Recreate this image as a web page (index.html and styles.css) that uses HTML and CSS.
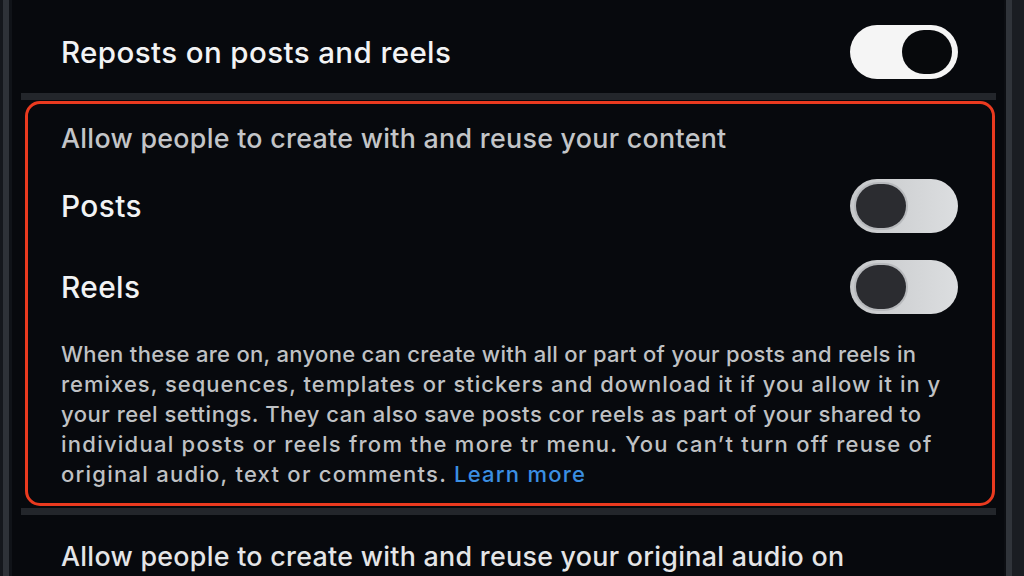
FILE: index.html
```html
<!DOCTYPE html>
<html>
<head>
  <meta charset="UTF-8">
  <title>Sharing and reuse</title>
  <link rel="stylesheet" href="styles.css">
</head>
<body>
  <div class="edge edge-left"></div>

  <div class="screen">
    <div class="setting-row top-row">
      <span class="setting-label">Reposts on posts and reels</span>
      <span class="toggle toggle-on"><span class="knob"></span></span>
    </div>

    <div class="divider"></div>

    <div class="reuse-box">
      <div class="section-title">Allow people to create with and reuse your content</div>

      <div class="setting-row">
        <span class="setting-label">Posts</span>
        <span class="toggle toggle-off"><span class="knob"></span></span>
      </div>

      <div class="setting-row">
        <span class="setting-label">Reels</span>
        <span class="toggle toggle-off"><span class="knob"></span></span>
      </div>

      <p class="note">
        <span class="line">When these are on, anyone can create with all or part of your posts and reels in</span>
        <span class="line line-wide">remixes, sequences, templates or stickers and download it if you allow it in y</span>
        <span class="line line-mid">your reel settings. They can also save posts cor reels as part of your shared to</span>
        <span class="line line-wider">individual posts or reels from the more tr menu. You can’t turn off reuse of</span>
        <span class="line line-wider">original audio, text or comments. <a href="#">Learn more</a></span>
      </p>
    </div>

    <div class="divider divider-low"></div>

    <div class="section-title section-next">Allow people to create with and reuse your original audio on</div>
  </div>

  <div class="edge edge-right"></div>
</body>
</html>
```

FILE: styles.css
```css
:root {
  --bg-color: #07090d;
  --text-color: #f2f3f4;
  --muted-text: #c3c5c8;
  --divider-color: #23262b;
  --highlight: #ea3a1f;
  --link-color: #3b8fe2;
}

html, body {
  height: 100%;
}

body {
  margin: 0;
  display: flex;
  overflow: hidden;
  background-color: var(--bg-color);
  color: var(--text-color);
  font-family: Inter, "Noto Sans", "Liberation Sans", sans-serif;
  font-weight: 500;
}

/* phone bezel visible on both sides */
.edge {
  flex: none;
}

.edge-left {
  width: 12px;
  background: linear-gradient(to right, #14171c 0 3px, #2e3238 3px 9px, #101318 9px);
}

.edge-right {
  width: 20px;
  background: linear-gradient(to right, #0c0e12 0 2px, #30343a 2px 8px, #1a1d22 8px);
}

.screen {
  flex: 1;
  display: flex;
  flex-direction: column;
}

.screen > * {
  flex: none;
}

.setting-row {
  display: flex;
  align-items: center;
  justify-content: space-between;
  padding: 0 34px 0 33px;
}

.top-row {
  box-sizing: border-box;
  height: 93px;
  padding: 10px 46px 0 49px;
}

.setting-label {
  font-size: 29.5px;
  letter-spacing: 0.4px;
}

.reuse-box .setting-label {
  font-size: 29.8px;
}

.divider {
  height: 7px;
  margin: 0 8px 0 9px;
  background-color: var(--divider-color);
}

.reuse-box {
  margin: 1px 9px 2px 13px;
  padding: 17px 0 14px;
  border: 3px solid var(--highlight);
  border-radius: 15px;
}

.reuse-box .setting-row {
  height: 81px;
}

.section-title {
  padding: 0 33px 10px;
  font-size: 26.8px;
  line-height: 34px;
  letter-spacing: 0.3px;
  color: var(--muted-text);
}

.section-next {
  padding: 24px 49px 0;
  color: #e4e5e7;
}

.note {
  margin: 12px 0 0;
  padding: 0 33px;
  font-size: 22px;
  line-height: 30px;
  color: #bfc1c4;
}

.note .line {
  display: block;
  white-space: nowrap;
  letter-spacing: 0.3px;
}

.note .line-mid {
  letter-spacing: 0.5px;
}

.note .line-wide {
  letter-spacing: 1px;
}

.note .line-wider {
  letter-spacing: 1.25px;
}

.note a {
  color: var(--link-color);
  text-decoration: none;
}

/* switches */
.toggle {
  position: relative;
  width: 108px;
  height: 54px;
  border-radius: 27px;
  box-sizing: border-box;
}

.toggle .knob {
  position: absolute;
  top: 5px;
  width: 50px;
  height: 44px;
  border-radius: 22px;
  box-sizing: border-box;
}

.toggle-on {
  background-color: #f5f5f5;
}

.toggle-on .knob {
  right: 6px;
  background-color: #07090c;
}

.toggle-off {
  background: linear-gradient(to right, #c6c8ca, #dcdee0);
}

.toggle-off .knob {
  left: 6px;
  background-color: #2b2c30;
  box-shadow: 0 0 0 2px #b7b9bc;
}
```
